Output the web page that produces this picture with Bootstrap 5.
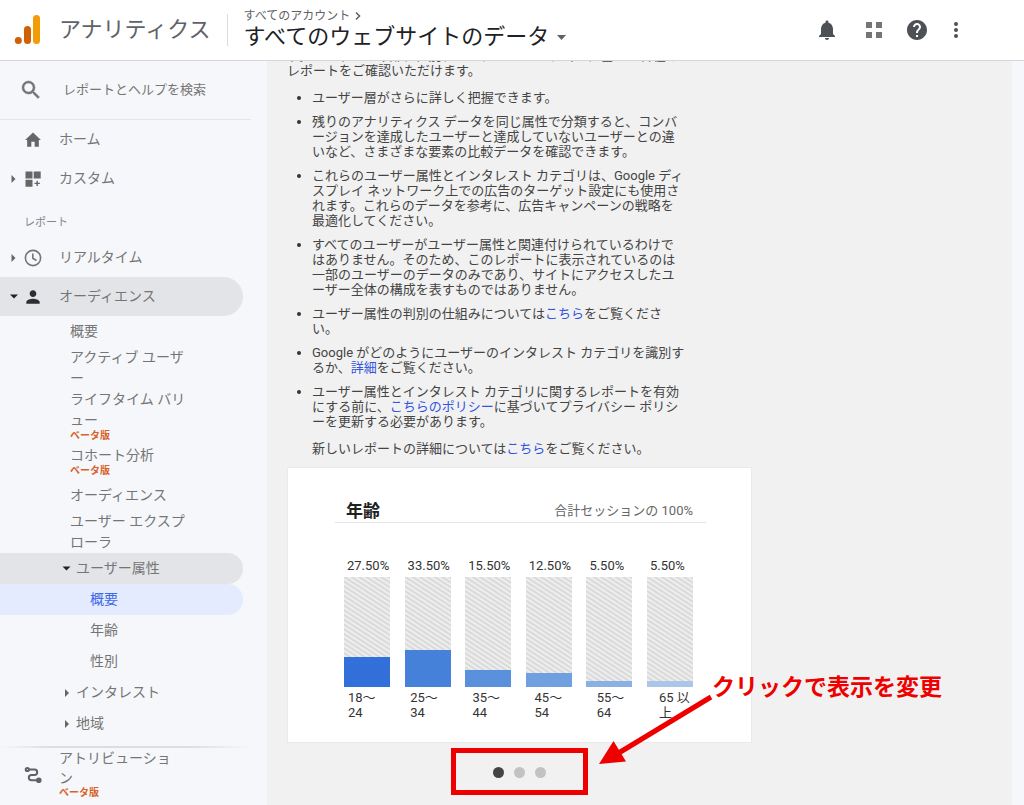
<!DOCTYPE html>
<html lang="ja">
<head>
<meta charset="utf-8">
<meta name="viewport" content="width=device-width, initial-scale=1">
<title>アナリティクス</title>
<link rel="stylesheet" href="https://cdn.jsdelivr.net/npm/bootstrap@5.3.0/dist/css/bootstrap.min.css">
<style>
  body { font-family: Roboto, "Noto Sans CJK JP", sans-serif; font-size: 14px; line-height: 21px; color: #444; background: #f6f7fa; }
  a { text-decoration: none; }
  svg { display: block; flex: none; }
  .topbar { height: 61px; border-bottom: 1px solid #d4d6da; padding-left: 13px; }
  .brand-name { font-size: 22px; line-height: 32px; color: #5f6368; margin-left: 16px; }
  .split { width: 1px; height: 32px; background: #dcdcdc; margin: 0 16px; }
  .titles { padding-bottom: 2px; }
  .crumb { font-size: 12px; line-height: 16px; color: #5f6368; }
  .view-name { font-size: 22px; line-height: 26px; color: #202124; }
  .tool { height: 40px; width: 38px; color: #4d5156; }
  .tool-bell { width: 48px; }
  .tool-apps { width: 46px; }
  .tool-help { width: 40px; }
  .tools { margin-right: 49px; }

  .side { width: 267px; flex: none; color: #757575; }
  .side a { color: inherit; }
  .search { height: 59px; border-bottom: 1px solid #e4e5e8; margin-right: 16px; padding-left: 19px; gap: 20px; }
  .search input { font-size: 13px; color: #757575; }
  .search input::placeholder { color: #757575; opacity: 1; }
  .nav-row { height: 39px; margin-right: 24px; }
  .caret-slot { width: 27px; padding-left: 10px; flex: none; }
  .icon-slot { width: 32px; flex: none; margin-left: -4px; }
  .nav-row .label { margin-left: 4px; }
  .section { font-size: 11px; line-height: 16px; padding: 17px 0 7px 24px; color: #80868b; }
  .pill { background: #e3e4e8; border-radius: 0 20px 20px 0; }
  .pill-on { background: #e4ebff; border-radius: 0 20px 20px 0; color: #3d68e8 !important; }
  .sub { margin-left: 70px; width: 120px; min-height: 31px; }
  .beta { font-size: 10px; line-height: 10px; font-weight: 700; color: #d8622a; padding-bottom: 4px; }
  .row3 { height: 31px; margin-right: 24px; padding-left: 90px; }
  .row3-head { padding-left: 62px; gap: 5px; }
  .foot-line { height: 2px; background: linear-gradient(90deg, transparent, #dcdde0 20%, #dcdde0 75%, transparent); margin-right: 16px; }
  .foot { height: 57px; padding: 0 0 3px 24px; line-height: 20px; gap: 17px; }
  .foot .name { width: 120px; }

  .report { background: #f1f1f1; margin-right: 12px; padding-left: 20px; font-size: 13px; line-height: 15px; }
  .scrolled { margin-top: -13px; }
  .copy { width: 399px; color: #444; }
  .copy a { color: #3355dd; }
  .copy ul { padding-left: 25px; margin: 12px 0; }
  .copy li { margin-bottom: 9px; }
  .copy li:last-child { margin-bottom: 0; }
  .copy li::marker { color: #333; }
  .copy .more { padding-left: 25px; margin-bottom: 11px; }
  .slide { width: 465px; }
  .panel { background: #fff; border: 1px solid #eaeaea; height: 276px; padding: 31px 45px 0 47px; }
  .panel-head { border-bottom: 1px solid #e4e4e4; height: 24px; padding: 0 13px 0 11px; }
  .panel-head h2 { font-size: 17px; line-height: 22px; font-weight: 700; color: #212121; }
  .panel-head span { color: #666; }
  .bars { padding: 35px 13px 0 9px; color: #333; }
  .bar-col { width: 46px; }
  .bar-col .pct { padding-left: 3px; white-space: nowrap; margin-bottom: 4px; }
  .track { height: 110px; background: repeating-linear-gradient(33deg, #dadada 0 1px, #eeeeee 2px 3px, #dadada 4px); }
  .fill { opacity: .96; }
  .ages { display: grid; grid-template-columns: repeat(6, 34px); justify-content: space-between; padding: 3px 13px 0 13px; color: #333; }
  .pager { width: 137px; height: 47px; border: 5px solid #ee0000; margin: 5px 0 0 164px; gap: 10px; padding-top: 2px; }
  .pager button { width: 11px; height: 11px; background: #c2c2c2; }
  .pager button.now { background: #444; }
  .callout { position: absolute; left: 312px; top: 205px; width: 360px; height: 100px; pointer-events: none; color: #ee0000; }
  .callout p { position: absolute; left: 113px; top: 1px; font-size: 23px; line-height: 30px; font-weight: 700; white-space: nowrap; margin: 0; }
</style>
</head>
<body class="vh-100 d-flex flex-column overflow-hidden">
<header class="topbar bg-white d-flex align-items-center flex-shrink-0">
  <svg width="30" height="32" viewBox="0 0 30 32" aria-hidden="true"><rect x="20" y="1" width="7" height="29" rx="3.5" fill="#f09d08"/><rect x="11" y="12" width="7" height="18" rx="3.5" fill="#d35f04"/><circle cx="5.3" cy="26.6" r="3.5" fill="#d35f04"/></svg>
  <span class="brand-name">アナリティクス</span>
  <span class="split"></span>
  <div class="titles">
    <div class="crumb d-flex align-items-center"><span>すべてのアカウント</span><svg class="ms-1" width="8" height="10" viewBox="0 0 8 10" fill="none" stroke="#5f6368" stroke-width="1.6"><path d="M2 1.5 5.5 5 2 8.5"/></svg></div>
    <button class="view-name btn p-0 border-0 d-flex align-items-center rounded-0"><span>すべてのウェブサイトのデータ</span><svg class="ms-2" width="9" height="5" viewBox="0 0 9 5"><path d="M0 0h9L4.5 5z" fill="#5f6368"/></svg></button>
  </div>
  <div class="tools d-flex ms-auto">
    <button class="tool tool-bell btn p-0 border-0 d-flex align-items-center justify-content-center" aria-label="通知"><svg width="24" height="24" viewBox="0 0 24 24" fill="currentColor"><path d="M12 22c1.1 0 2-.9 2-2h-4c0 1.1.89 2 2 2zm6-6v-5c0-3.07-1.64-5.64-4.5-6.32V4c0-.83-.67-1.5-1.5-1.5s-1.5.67-1.5 1.5v.68C7.63 5.36 6 7.92 6 11v5l-2 2v1h16v-1l-2-2z"/></svg></button>
    <button class="tool tool-apps btn p-0 border-0 d-flex align-items-center justify-content-center" aria-label="アプリ"><svg width="24" height="24" viewBox="0 0 24 24" fill="#757575"><path d="M4 4h6v6H4zM14 4h6v6h-6zM4 14h6v6H4zM14 14h6v6h-6z"/></svg></button>
    <button class="tool tool-help btn p-0 border-0 d-flex align-items-center justify-content-center" aria-label="ヘルプ"><svg width="24" height="24" viewBox="0 0 24 24" fill="currentColor"><path d="M12 2C6.48 2 2 6.48 2 12s4.48 10 10 10 10-4.48 10-10S17.52 2 12 2zm1 17h-2v-2h2v2zm2.07-7.75l-.9.92C13.45 12.9 13 13.5 13 15h-2v-.5c0-1.1.45-2.1 1.17-2.83l1.24-1.26c.37-.36.59-.86.59-1.41 0-1.1-.9-2-2-2s-2 .9-2 2H8c0-2.21 1.79-4 4-4s4 1.79 4 4c0 .88-.36 1.68-.93 2.25z"/></svg></button>
    <button class="tool btn p-0 border-0 d-flex align-items-center justify-content-center" aria-label="その他"><svg width="24" height="24" viewBox="0 0 24 24" fill="currentColor"><circle cx="12" cy="6" r="2"/><circle cx="12" cy="12" r="2"/><circle cx="12" cy="18" r="2"/></svg></button>
  </div>
</header>

<div class="d-flex flex-grow-1 overflow-hidden">
  <nav class="side d-flex flex-column">
    <div class="flex-grow-1 overflow-hidden">
      <div class="search d-flex align-items-center">
        <svg width="24" height="24" viewBox="0 0 24 24" fill="#757575" stroke="#757575" stroke-width=".5"><path d="M15.5 14h-.79l-.28-.27A6.471 6.471 0 0 0 16 9.5 6.5 6.5 0 1 0 9.5 16c1.61 0 3.09-.59 4.23-1.57l.27.28v.79l5 4.99L20.49 19l-4.99-5zm-6 0C7.01 14 5 11.99 5 9.5S7.01 5 9.5 5 14 7.01 14 9.5 11.99 14 9.5 14z"/></svg>
        <input class="form-control p-0 border-0 bg-transparent shadow-none" type="text" placeholder="レポートとヘルプを検索" aria-label="レポートとヘルプを検索">
      </div>
      <a href="#" class="nav-row d-flex align-items-center"><span class="caret-slot"></span><span class="icon-slot"><svg width="20" height="20" viewBox="0 0 24 24" fill="#666"><path d="M10 20v-6h4v6h5v-8h2.5L12 3 2.5 12H5v8z"/></svg></span><span class="label">ホーム</span></a>
      <a href="#" class="nav-row d-flex align-items-center"><span class="caret-slot"><svg width="6" height="8" viewBox="0 0 6 8"><path d="M1.500 0v8l4-4z" fill="#666"/></svg></span><span class="icon-slot"><svg width="20" height="20" viewBox="0 0 20 20" fill="#666"><path d="M2.500 2.500h7v7h-7zM10.700 2.500h7v7h-7zM2.500 10.700h7v7h-7zM13.500 11.700h1.400v2h2v1.400h-2v2h-1.400v-2h-2v-1.400h2z"/></svg></span><span class="label">カスタム</span></a>
      <div class="section">レポート</div>
      <a href="#" class="nav-row d-flex align-items-center"><span class="caret-slot"><svg width="6" height="8" viewBox="0 0 6 8"><path d="M1.500 0v8l4-4z" fill="#666"/></svg></span><span class="icon-slot"><svg width="20" height="20" viewBox="0 0 20 20" fill="none" stroke="#757575" stroke-width="1.6"><circle cx="10" cy="10" r="7.6"/><path d="M9.8 5.5V10.3L13.5 12.5"/></svg></span><span class="label">リアルタイム</span></a>
      <a href="#" class="nav-row pill d-flex align-items-center"><span class="caret-slot"><svg width="8" height="5" viewBox="0 0 8 5"><path d="M0 .5h8l-4 4z" fill="#222"/></svg></span><span class="icon-slot"><svg width="20" height="20" viewBox="0 0 24 24" fill="#2b2e32"><path d="M12 12c2.21 0 4-1.79 4-4s-1.79-4-4-4-4 1.79-4 4 1.79 4 4 4zm0 2c-2.67 0-8 1.34-8 4v2h16v-2c0-2.66-5.33-4-8-4z"/></svg></span><span class="label">オーディエンス</span></a>

      <a href="#" class="sub d-flex align-items-center">概要</a>
      <a href="#" class="sub d-flex align-items-center">アクティブ ユーザー</a>
      <a href="#" class="sub d-block">ライフタイム バリュー<div class="beta">ベータ版</div></a>
      <a href="#" class="sub d-block">コホート分析<div class="beta">ベータ版</div></a>
      <a href="#" class="sub d-flex align-items-center">オーディエンス</a>
      <a href="#" class="sub d-flex align-items-center">ユーザー エクスプローラ</a>

      <a href="#" class="row3 row3-head pill d-flex align-items-center"><svg width="9" height="5" viewBox="0 0 9 5"><path d="M.5 .5h8l-4 4z" fill="#222"/></svg><span>ユーザー属性</span></a>
      <a href="#" class="row3 pill-on d-flex align-items-center">概要</a>
      <a href="#" class="row3 d-flex align-items-center">年齢</a>
      <a href="#" class="row3 d-flex align-items-center">性別</a>
      <a href="#" class="row3 row3-head d-flex align-items-center"><svg width="9" height="8" viewBox="0 0 9 8"><path d="M3 0v8l4-4z" fill="#666"/></svg><span>インタレスト</span></a>
      <a href="#" class="row3 row3-head d-flex align-items-center"><svg width="9" height="8" viewBox="0 0 9 8"><path d="M3 0v8l4-4z" fill="#666"/></svg><span>地域</span></a>
    </div>
    <div class="foot-line"></div>
    <a href="#" class="foot d-flex align-items-center">
      <svg width="18" height="18" viewBox="0 0 18 18" fill="none" stroke="#5f6368" stroke-width="2"><circle cx="3.3" cy="3.5" r="1.6"/><path d="M5 3.5h5.5a2.7 2.7 0 0 1 0 5.4H7.5a2.7 2.7 0 0 0 0 5.4H13"/><circle cx="14.8" cy="14.2" r="1.8" fill="#5f6368"/></svg>
      <div class="name">アトリビューション<div class="beta">ベータ版</div></div>
    </a>
  </nav>

  <main class="report flex-grow-1 overflow-hidden">
    <div class="scrolled">
      <div class="copy">
        <div>す。ユーザーの年齢、性別、インタレスト カテゴリに基づく各種のレポートをご確認いただけます。</div>
        <ul>
          <li>ユーザー層がさらに詳しく把握できます。</li>
          <li>残りのアナリティクス データを同じ属性で分類すると、コンバージョンを達成したユーザーと達成していないユーザーとの違いなど、さまざまな要素の比較データを確認できます。</li>
          <li>これらのユーザー属性とインタレスト カテゴリは、Google ディスプレイ ネットワーク上での広告のターゲット設定にも使用されます。これらのデータを参考に、広告キャンペーンの戦略を最適化してください。</li>
          <li>すべてのユーザーがユーザー属性と関連付けられているわけではありません。そのため、このレポートに表示されているのは一部のユーザーのデータのみであり、サイトにアクセスしたユーザー全体の構成を表すものではありません。</li>
          <li>ユーザー属性の判別の仕組みについては<a href="#">こちら</a>をご覧ください。</li>
          <li>Google がどのようにユーザーのインタレスト カテゴリを識別するか、<a href="#">詳細</a>をご覧ください。</li>
          <li>ユーザー属性とインタレスト カテゴリに関するレポートを有効にする前に、<a href="#">こちらのポリシー</a>に基づいてプライバシー ポリシーを更新する必要があります。</li>
        </ul>
        <p class="more">新しいレポートの詳細については<a href="#">こちら</a>をご覧ください。</p>
      </div>
      <section class="slide position-relative">
        <div class="panel">
          <div class="panel-head d-flex justify-content-between align-items-center"><h2 class="m-0">年齢</h2><span>合計セッションの 100%</span></div>
          <div class="bars d-flex justify-content-between">
            <div class="bar-col"><div class="pct">27.50%</div><div class="track d-flex align-items-end"><div class="fill w-100" style="height:27.5%;background:#2c6ad7"></div></div></div>
            <div class="bar-col"><div class="pct">33.50%</div><div class="track d-flex align-items-end"><div class="fill w-100" style="height:33.5%;background:#3e7cd9"></div></div></div>
            <div class="bar-col"><div class="pct">15.50%</div><div class="track d-flex align-items-end"><div class="fill w-100" style="height:15.5%;background:#528cdb"></div></div></div>
            <div class="bar-col"><div class="pct">12.50%</div><div class="track d-flex align-items-end"><div class="fill w-100" style="height:12.5%;background:#6b9cdf"></div></div></div>
            <div class="bar-col"><div class="pct">5.50%</div><div class="track d-flex align-items-end"><div class="fill w-100" style="height:5.5%;background:#86ade2"></div></div></div>
            <div class="bar-col"><div class="pct">5.50%</div><div class="track d-flex align-items-end"><div class="fill w-100" style="height:5.5%;background:#a9c5e9"></div></div></div>
          </div>
          <div class="ages"><span>18～24</span><span>25～34</span><span>35～44</span><span>45～54</span><span>55～64</span><span>65 以上</span></div>
        </div>
        <div class="pager d-flex align-items-center justify-content-center">
          <button class="now rounded-circle border-0 p-0" aria-label="1"></button><button class="rounded-circle border-0 p-0" aria-label="2"></button><button class="rounded-circle border-0 p-0" aria-label="3"></button>
        </div>
        <div class="callout">
          <svg width="116" height="100" viewBox="0 0 116 100"><path d="M112 25 18 82" stroke="#ee0000" stroke-width="5"/><path d="M0 92 14.5 69 27 89.5z" fill="#ee0000"/></svg>
          <p>クリックで表示を変更</p>
        </div>
      </section>
    </div>
  </main>
</div>
<script src="https://cdn.jsdelivr.net/npm/bootstrap@5.3.0/dist/js/bootstrap.bundle.min.js"></script>
</body>
</html>
